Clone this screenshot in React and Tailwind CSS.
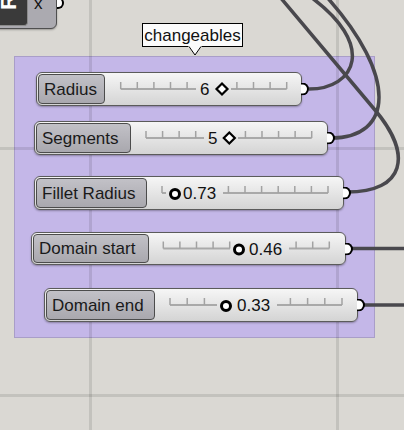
import React from 'react';

// slider definitions, global canvas coords (px)
const sliders = [
  {
    label: 'Radius', x: 36, y: 72, w: 266, h: 34, kind: 'int', value: '6',
    pos: 'left-[36px] top-[72px] w-[266px] h-[34px]', lw: 'w-[67px]', tx: 'left-[164px]',
    t0: 120.7, t1: 286.7, knob: 222, gap: [196, 231],
  },
  {
    label: 'Segments', x: 34, y: 121, w: 294, h: 34, kind: 'int', value: '5',
    pos: 'left-[34px] top-[121px] w-[294px] h-[34px]', lw: 'w-[95px]', tx: 'left-[174px]',
    t0: 146, t1: 311.7, knob: 229.3, gap: [204, 238],
  },
  {
    label: 'Fillet Radius', x: 34, y: 176, w: 310, h: 34, kind: 'float', value: '0.73',
    pos: 'left-[34px] top-[176px] w-[310px] h-[34px]', lw: 'w-[111px]', tx: 'left-[149px]',
    t0: 162, t1: 328, knob: 175, gap: [166, 223],
  },
  {
    label: 'Domain start', x: 31, y: 232, w: 315, h: 33, kind: 'float', value: '0.46',
    pos: 'left-[31px] top-[232px] w-[315px] h-[33px]', lw: 'w-[116px]', tx: 'left-[218px]',
    t0: 163.3, t1: 329.3, knob: 239, gap: [230, 289],
  },
  {
    label: 'Domain end', x: 44, y: 288, w: 314, h: 34, kind: 'float', value: '0.33',
    pos: 'left-[44px] top-[288px] w-[314px] h-[34px]', lw: 'w-[109px]', tx: 'left-[193px]',
    t0: 170, t1: 342, knob: 226, gap: [217, 277],
  },
];

function Track({ s }) {
  const ty = s.h / 2;
  const lx = (gx) => gx - s.x;
  const ticks = Array.from({ length: 11 }, (_, i) => s.t0 + ((s.t1 - s.t0) * i) / 10);
  const [g0, g1] = s.gap;
  const k = lx(s.knob);

  return (
    <svg className="absolute inset-0" width={s.w} height={s.h}>
      {g0 > s.t0 && <line x1={lx(s.t0)} y1={ty} x2={lx(g0)} y2={ty} stroke="#a9a9a9" strokeWidth="2" />}
      <line x1={lx(g1)} y1={ty} x2={lx(s.t1)} y2={ty} stroke="#a9a9a9" strokeWidth="2" />
      {ticks
        .filter((t) => t <= g0 || t >= g1)
        .map((t, i) => (
          <line key={i} x1={lx(t)} y1={ty - 7} x2={lx(t)} y2={ty} stroke="#a2a2a2" strokeWidth="1.5" />
        ))}
      {s.kind === 'int' ? (
        <polygon
          points={`${k},${ty - 5.5} ${k + 5.5},${ty} ${k},${ty + 5.5} ${k - 5.5},${ty}`}
          fill="#fff"
          stroke="#000"
          strokeWidth="2.2"
        />
      ) : (
        <circle cx={k} cy={ty + 1} r="4.5" fill="#fff" stroke="#000" strokeWidth="3" />
      )}
    </svg>
  );
}

function Slider({ s }) {
  return (
    <div className={`absolute ${s.pos} rounded-[6px] border border-[#5b5b5b] bg-linear-to-b from-[#f6f6f6] to-[#d4d4d4] shadow-[0_1px_2px_rgba(0,0,0,0.3)] p-px flex`}>
      {/* name */}
      <div className={`${s.lw} h-full rounded-[4px] border border-[#4c4c4c] bg-linear-to-b from-[#c2c1c7] to-[#a9a8ae] flex items-center pl-[5px] text-[17px] leading-none text-[#1a1a1a] whitespace-nowrap`}>
        {s.label}
      </div>

      {/* slider rail + value */}
      <div className="absolute -inset-px">
        <Track s={s} />
        <span className={`absolute ${s.tx} top-1/2 -translate-y-1/2 text-[17px] leading-none text-[#111]`}>
          {s.value}
        </span>
      </div>

      {/* output grip */}
      <div className="absolute right-[-8px] top-1/2 -translate-y-1/2 w-[8px] h-[13px] rounded-r-full border-2 border-l-0 border-black bg-white" />
    </div>
  );
}

export default function App() {
  return (
    <div className="relative w-[404px] h-[430px] overflow-hidden bg-[#dad8d3] font-['Liberation_Sans',Arial,sans-serif]">
      {/* Group */}
      <div className="absolute left-[14px] top-[56px] w-[361px] h-[282px] bg-[#c4b7e8] border border-[#a99ec8]" />

      {/* canvas grid */}
      <svg className="absolute inset-0" width="404" height="430">
        <g stroke="rgba(0,0,0,0.1)" strokeWidth="3">
          <line x1="90.5" y1="0" x2="90.5" y2="430" />
          <line x1="337.5" y1="0" x2="337.5" y2="430" />
          <line x1="0" y1="148.5" x2="404" y2="148.5" />
          <line x1="0" y1="395.5" x2="404" y2="395.5" />
        </g>
      </svg>

      {/* wires */}
      <svg className="absolute inset-0" width="404" height="430">
        <g stroke="#49484d" strokeWidth="3.5" fill="none">
          <path d="M309,89 C355,89 378,45 308,-5" />
          <path d="M331,138 C392,138 400,78 325,-5" />
          <path d="M347,192 C405,192 413,155 375,110 L280,-3" />
          <path d="M349,248.5 L410,248.5" />
          <path d="M361,305 L410,305" />
        </g>
      </svg>

      {/* component cut off at top-left */}
      <div className="absolute left-[-6px] top-[-8px] w-[63px] h-[37px] rounded-[6px] border border-[#4f4f4f] bg-[#abaab0] shadow-[0_1px_2px_rgba(0,0,0,0.3)]">
        <div className="relative w-[33px] h-[33px] bg-[#3a3a3a] rounded-br-[4px] border-r border-b border-[#8c8c8c] overflow-hidden">
          <span className="absolute left-[6px] top-[-2px] -rotate-90 text-[22px] font-bold leading-none text-white">R</span>
        </div>
        <span className="absolute left-[39px] top-[2px] text-[17px] leading-none text-[#111]">x</span>
        <div className="absolute left-[62px] top-[4px] w-[7px] h-[12px] rounded-r-full border-2 border-l-0 border-black bg-white" />
      </div>

      {/* group name tag */}
      <div className="absolute left-[142px] top-[23px] w-[101px] h-[24px] border border-black bg-[#fbfbfb] flex items-center justify-center text-[17px] leading-none text-[#111]">
        changeables
      </div>
      <svg className="absolute left-[188px] top-[46px]" width="14" height="11">
        <polygon points="0,0 14,0 7,9" fill="#fbfbfb" />
        <polyline points="1,0.5 7,9 13,0.5" fill="none" stroke="#000" strokeWidth="1" />
      </svg>

      {sliders.map((s) => (
        <Slider key={s.label} s={s} />
      ))}
    </div>
  );
}
